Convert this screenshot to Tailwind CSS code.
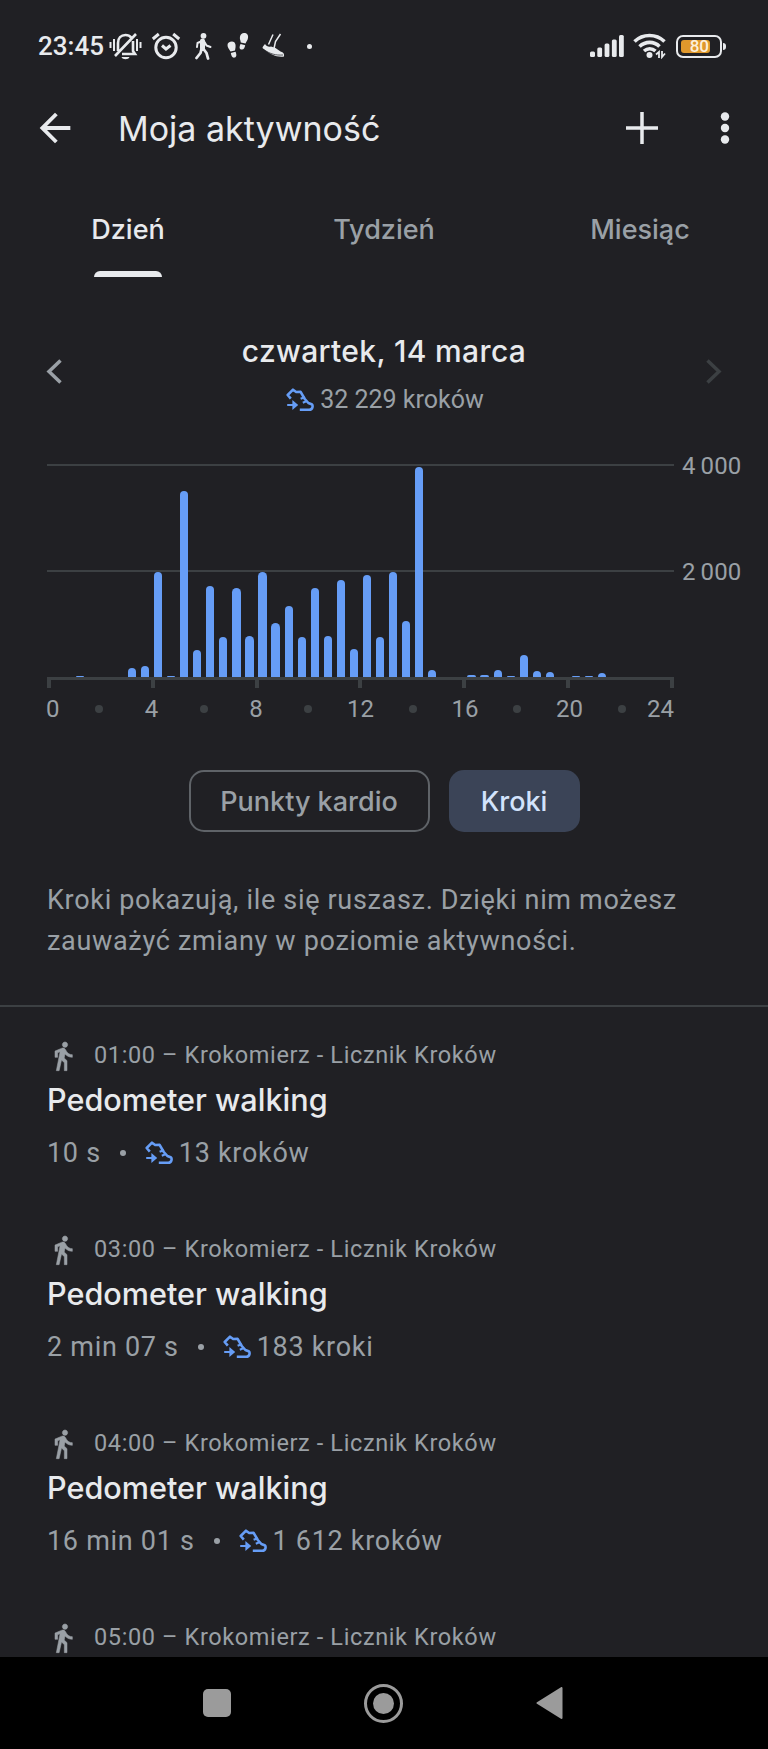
<!DOCTYPE html>
<html lang="pl">
<head>
    <meta charset="UTF-8">
    <meta name="viewport" content="width=device-width, initial-scale=1.0">
    <title>Moja aktywność</title>
    <script src="https://cdn.jsdelivr.net/npm/@tailwindcss/browser@4"></script>
</head>
<body class="bg-[#202024] font-['Roboto',sans-serif] text-[#9aa0a6]">
    <svg class="hidden">
        <symbol id="walk" viewBox="0 0 24 24">
            <path fill="currentColor" stroke="currentColor" stroke-width=".4" d="M13.5 5.5c1.1 0 2-.9 2-2s-.9-2-2-2-2 .9-2 2 .9 2 2 2zM9.8 8.9L7 23h2.1l1.8-8 2.1 2v6h2v-7.5l-2.1-2 .6-3C14.8 12 16.8 13 19 13v-2c-1.9 0-3.500-1-4.300-2.400l-1-1.600c-.4-.6-1-1-1.700-1-.3 0-.5.1-.8.1L6 8.300V13h2V9.600l1.800-.7"/>
        </symbol>
        <symbol id="shoe" viewBox="0 0 28 24">
            <g fill="none" stroke="currentColor" stroke-width="2.6" stroke-linejoin="round">
                <path d="M4.800 10.600 1.700 7 7 1.700l3.200 2.300 4.400-.2 4.200 7.200 3.600 4 3.200 1.200c1.600 1 1.400 5.600-2.400 5.600H13.800"/>
                <path stroke-width="2.200" d="m14.600 10.800 4-1.600M16.800 14.800l4-1.800M1.200 17H8"/>
            </g>
            <path fill="currentColor" d="M6.400 12 12.200 17l-5.800 5z"/>
        </symbol>
    </svg>

    <div class="flex h-[1749px] w-[768px] flex-col overflow-hidden">
        <!-- status bar -->
        <div class="flex h-[92px] shrink-0 items-center pl-[38px] text-[#e8eaed]">
            <span class="w-[71px] text-[26px] font-medium leading-none">23:45</span>
            <svg class="h-[30px] w-[33px]" viewBox="0 0 33 30" fill="none" stroke="currentColor" stroke-width="2.6">
                <path d="M1.5 11v6M5 8v12M28 8v12M31.5 11v6" stroke-width="2"/>
                <path d="M9 20V12c0-5 3-8 7.5-8 2.5 0 4.5 1 5.8 2.6M24 10v10l2 3H13M6 25 27 3"/>
                <path d="M12.5 26h8c-1 3-7 3-8 0z" fill="currentColor" stroke="none"/>
            </svg>
            <svg class="ml-[9px] h-[30px] w-[30px]" viewBox="0 0 30 30" fill="none" stroke="currentColor" stroke-width="3">
                <circle cx="15" cy="16.5" r="10.2"/>
                <path d="m1.8 8 6-5M28.2 8l-6-5M11 14.500l4 3.500 4.500-3.500"/>
            </svg>
            <svg class="ml-[12px] h-[28px] w-[20px]" viewBox="0 0 20 28" fill="none" stroke="currentColor" stroke-linecap="round" stroke-linejoin="round">
                <circle cx="10.5" cy="3.8" r="2.9" fill="currentColor" stroke="none"/>
                <path d="M9.5 9v7" stroke-width="5"/>
                <path d="M8 9.500 4.500 11 4 15M11.500 10l2 3.500 4 1.500" stroke-width="2"/>
                <path d="m8.500 17-1 4-4 5M10.500 17l3 4 1.500 5.500" stroke-width="2.8"/>
            </svg>
            <svg class="ml-[14px] h-[28px] w-[22px]" viewBox="0 0 22 28" fill="currentColor">
                <path d="M5 9.500c3 0 4 3 3.500 6l-.5 3-4.500 1c-1.500-2.500-3-4-3-6.500 0-2 2-3.500 4.500-3.500zM3.800 21l4.700-1.200c1 2.200 1.500 5-.7 5.800-2.600.8-3.500-2-4-4.600z"/>
                <path d="M17 1c3-.2 4.500 2 4 5-.3 2-1.500 3.500-2.500 5.500l-4.700-1C13.500 8 12.500 7 13 4.500 13.500 2.500 15 1 17 1zM13.600 12l4.600 1.200c-.4 2.500-1.600 5-4 4.300-2.400-.7-1.600-3.500-.6-5.500z"/>
            </svg>
            <!-- foot in a running shoe -->
            <svg class="ml-[13px] h-[28px] w-[25px]" viewBox="0 0 25 28">
                <path fill="currentColor" d="M3 12c1.500 2.500 3.500 3 6 2.500l4.500 1.500 5 3.500c3 .8 4 2.500 3.500 5-7 1-14-2-21.500-8.500C.5 14.500 2 13.500 3 12z"/>
                <path d="m11 2.500-4.500 10M18.500 2 13.500 9.500l-1.500 7" fill="none" stroke="currentColor" stroke-width="1.500"/>
                <path d="M1.500 17.500c7 4.500 12 6 19.500 5.500" fill="none" stroke="#202024" stroke-width=".7"/>
            </svg>
            <span class="ml-[20px] size-[5px] rounded-full bg-current"></span>
            <svg class="ml-[278px] h-[24px] w-[34px]" viewBox="0 0 34 24" fill="currentColor">
                <rect x="0" y="17.5" width="5" height="5.500" rx="1.500"/>
                <rect x="7.3" y="13.5" width="4.800" height="9.500" rx="1.500"/>
                <rect x="14.6" y="9.5" width="4.800" height="13.500" rx="1.500"/>
                <rect x="21.9" y="5.5" width="4.800" height="17.500" rx="1.500"/>
                <rect x="29" y="1" width="4.800" height="22" rx="1.500"/>
            </svg>
            <svg class="ml-[9px] h-[26px] w-[34px]" viewBox="0 0 34 26" fill="none" stroke="currentColor" stroke-width="3.6">
                <path d="M1.500 8.500c8.500-8 21.500-8 30 0M6.500 13.500c6-5.500 14.500-5.500 20 0M11 18c3.500-3 8-3 11.500 0"/>
                <circle cx="16.5" cy="22" r="3" fill="currentColor" stroke="none"/>
                <path d="m23 21.500 3-2.500v6M32 20.500 29 24v-6" stroke-width="1.800"/>
            </svg>
            <div class="ml-[9px] flex h-[23px] w-[46px] rounded-[7px] border-2 border-current p-[3px]">
                <div class="flex w-[29px] items-center justify-end rounded-[3px] bg-[#e0982c] pr-px text-[17px] font-medium leading-none text-[#fdf0dc]">80</div>
            </div>
            <span class="ml-[1px] h-[7px] w-[3px] rounded-r bg-current"></span>
        </div>

        <!-- app bar -->
        <div class="flex h-[72px] shrink-0 items-center pl-[32px] text-[#e8eaed]">
            <svg class="size-[46px]" viewBox="0 0 24 24" fill="currentColor"><path d="M20 11H7.83l5.59-5.59L12 4l-8 8 8 8 1.410-1.410L7.830 13H20v-2z"/></svg>
            <h1 class="ml-[40px] w-[485px] whitespace-nowrap font-['Inter',sans-serif] text-[34px]">Moja aktywność</h1>
            <svg class="ml-[16px] size-[46px]" viewBox="0 0 46 46" stroke="currentColor" stroke-width="3.5"><path d="M23 7v32M7 23h32"/></svg>
            <svg class="ml-[37px] size-[46px]" viewBox="0 0 46 46" fill="currentColor"><circle cx="23" cy="11.5" r="4.2"/><circle cx="23" cy="23" r="4.2"/><circle cx="23" cy="34.5" r="4.2"/></svg>
        </div>

        <!-- tabs -->
        <div class="grid h-[113px] shrink-0 grid-cols-3 pt-[45px] text-center font-['Inter',sans-serif] text-[27px] font-medium leading-[42px]">
            <div class="flex flex-col items-center justify-between text-[#e8eaed]">
                Dzień
                <span class="h-[6px] w-[68px] rounded-t-[6px] bg-[#e8eaed]"></span>
            </div>
            <div>Tydzień</div>
            <div>Miesiąc</div>
        </div>

        <!-- selected day -->
        <div class="flex h-[187px] shrink-0 items-start justify-between px-[46px] pt-[53px]">
            <svg class="mt-[29px] h-[25px] w-[16px]" viewBox="0 0 16 25" fill="none" stroke="currentColor" stroke-width="3.5"><path d="M14.5 1.5 3 12.500l11.500 11"/></svg>
            <div class="flex flex-col items-center pt-px">
                <h2 class="font-['Inter',sans-serif] text-[30px] font-medium leading-[40px] tracking-[0.35px] text-[#e8eaed]">czwartek, 14 marca</h2>
                <p class="mt-[13px] flex items-center gap-[6px] pl-[2px] text-[25px] leading-[32px]">
                    <svg class="h-[24px] w-[28px] text-[#669df6]"><use href="#shoe"/></svg>
                    32 229 kroków
                </p>
            </div>
            <svg class="mt-[29px] h-[25px] w-[16px] text-[#3c4043]" viewBox="0 0 16 25" fill="none" stroke="currentColor" stroke-width="3.5"><path d="m1.500 1.500 11.500 11-11.500 11"/></svg>
        </div>

        <!-- chart -->
        <div class="flex h-[306px] shrink-0 gap-[8px] pl-[47px]">
            <div class="w-[627px]">
                <div class="relative h-[213px]">
                    <div class="absolute inset-x-0 top-0 h-[2px] bg-[#3c4043]"></div>
                    <div class="absolute inset-x-0 top-[106px] h-[2px] bg-[#3c4043]"></div>
                    <div id="bars" class="relative flex h-full items-end"></div>
                </div>
                <div class="h-[3px] bg-[#3c4043]"></div>
                <div class="flex h-[8px] justify-between">
                    <span class="w-[4px] bg-[#3c4043]"></span>
                    <span class="w-[4px] bg-[#3c4043]"></span>
                    <span class="w-[4px] bg-[#3c4043]"></span>
                    <span class="w-[4px] bg-[#3c4043]"></span>
                    <span class="w-[4px] bg-[#3c4043]"></span>
                    <span class="w-[4px] bg-[#3c4043]"></span>
                    <span class="w-[4px] bg-[#3c4043]"></span>
                </div>
                <div id="hours" class="mt-[6px] flex h-[30px] items-center text-[24px] leading-none"></div>
            </div>
            <div class="-mt-[13px] flex flex-col gap-[76px] text-[24px] leading-[30px] tracking-[0.1px]">
                <span>4&#8201;000</span>
                <span>2&#8201;000</span>
            </div>
        </div>

        <!-- metric switch -->
        <div class="flex h-[62px] shrink-0 justify-center gap-[19px] font-['Inter',sans-serif] text-[27px] font-medium">
            <button class="h-[62px] w-[241px] rounded-[15px] border-2 border-[#5f6368] pt-[2px]">Punkty kardio</button>
            <button class="h-[62px] w-[131px] rounded-[15px] bg-[#3b4457] pt-[2px] text-[#d2e3fc]">Kroki</button>
        </div>

        <p class="h-[175px] shrink-0 border-b-2 border-[#3c4043] pl-[47px] pt-[48px] text-[27px] leading-[41px] tracking-[0.68px]">Kroki pokazują, ile się ruszasz. Dzięki nim możesz<br>zauważyć zmiany w poziomie aktywności.</p>

        <div id="activities" class="min-h-0 flex-1 overflow-hidden pt-[31px]"></div>

        <!-- system navigation -->
        <div class="flex h-[92px] shrink-0 items-center bg-black pl-[203px] text-[#9b9b9b]">
            <span class="size-[28px] rounded-[5px] bg-current"></span>
            <span class="ml-[133px] flex size-[39px] items-center justify-center rounded-full border-[3px] border-current"><span class="size-[21px] rounded-full bg-current"></span></span>
            <svg class="ml-[133px] h-[32px] w-[27px]" viewBox="0 0 27 32" fill="currentColor" stroke="currentColor" stroke-width="2" stroke-linejoin="round"><path d="M25.5 1v30L1.500 16z"/></svg>
        </div>
    </div>

    <script>
        // bar heights in px, one per half hour
        const steps = [
            0, 0, 1, 0, 0, 0, 9, 11, 105, 1, 186, 27,
            91, 40, 89, 41, 105, 54, 71, 40, 89, 41, 97, 28,
            102, 40, 105, 56, 210, 7, 0, 0, 2.5, 2.5, 7, 1,
            22, 6, 5, 0, 1, 1, 4, 0, 0, 0, 0, 0
        ];
        document.getElementById('bars').innerHTML = steps.map(h =>
            `<div class="flex flex-1 justify-center"><div class="w-[8.3px] rounded-t-full bg-[#669df6]" style="height:${h}px"></div></div>`
        ).join('');

        const dot = '<span class="size-[8px] rounded-full bg-[#3c4043]"></span>';
        let hours = '<span class="-ml-px w-[27px]">0</span>';
        for (let h = 2; h < 24; h += 2) {
            hours += `<span class="flex w-[52.27px] justify-center">${h % 4 ? dot : h}</span>`;
        }
        document.getElementById('hours').innerHTML = hours + '<span class="flex w-[26px] justify-end">24</span>';

        const activities = [
            { time: '01:00', duration: '10 s', steps: '13 kroków' },
            { time: '03:00', duration: '2 min 07 s', steps: '183 kroki' },
            { time: '04:00', duration: '16 min 01 s', steps: '1 612 kroków' },
            { time: '05:00' }
        ];

        // the last entry has only its header above the navigation bar
        const details = a => `
                <h3 class="h-[52px] font-['Inter',sans-serif] text-[30.6px] font-medium leading-[52px] text-[#e8eaed]">Pedometer walking</h3>
                <div class="flex h-[54px] items-center text-[27px] tracking-[0.7px]">
                    ${a.duration}
                    <span class="mx-[19px] size-[6px] rounded-full bg-current"></span>
                    <svg class="mr-[6px] h-[24px] w-[28px] text-[#669df6]"><use href="#shoe"/></svg>
                    ${a.steps}
                </div>`;

        document.getElementById('activities').innerHTML = activities.map(a => `
            <div class="pb-[52px] pl-[47px]">
                <div class="flex h-[36px] items-center text-[23.5px] tracking-[0.62px]">
                    <svg class="mr-[15px] size-[32px]"><use href="#walk"/></svg>
                    ${a.time} – Krokomierz - Licznik Kroków
                </div>${a.duration ? details(a) : ''}
            </div>`).join('');
    </script>
</body>
</html>
